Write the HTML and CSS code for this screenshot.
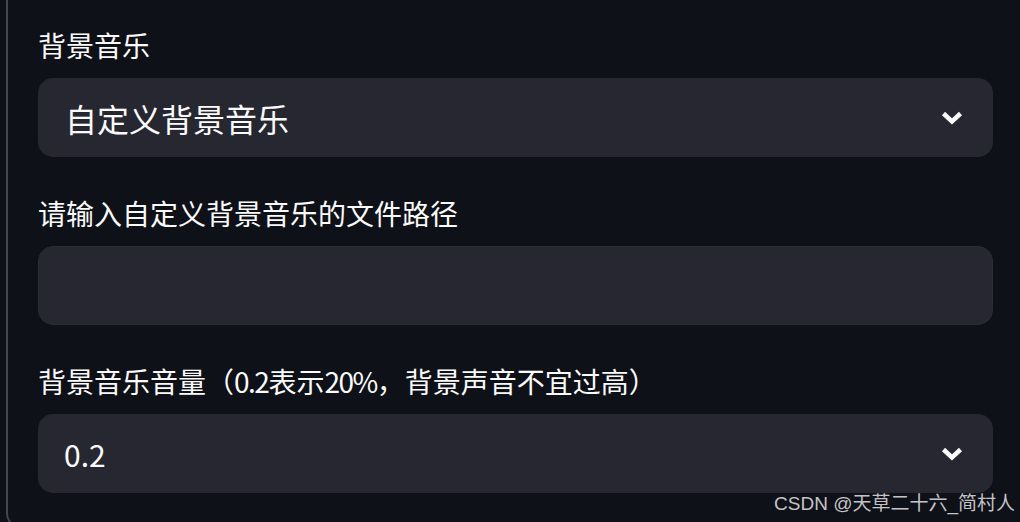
FILE: index.html
```html
<!DOCTYPE html>
<html lang="zh">
<head>
<meta charset="utf-8">
<title>背景音乐</title>
<link rel="stylesheet" href="styles.css">
</head>
<body>
<div class="panel">
  <div class="field">
    <div class="label">背景音乐</div>
    <div class="box select">
      <span class="value big">自定义背景音乐</span>
      <svg class="chev" width="24" height="24" viewBox="0 0 24 24"><path d="M3.5 7.5 L12 15.5 L20.5 7.5" fill="none" stroke="#fafafa" stroke-width="4.5" stroke-linejoin="miter" stroke-linecap="butt"/></svg>
    </div>
  </div>
  <div class="field">
    <div class="label">请输入自定义背景音乐的文件路径</div>
    <div class="box input"></div>
  </div>
  <div class="field">
    <div class="label">背景音乐音量（<span class="lat">0.2</span>表示<span class="lat">20%</span>，背景声音不宜过高）</div>
    <div class="box select">
      <span class="value num">0.2</span>
      <svg class="chev" width="24" height="24" viewBox="0 0 24 24"><path d="M3.5 7.5 L12 15.5 L20.5 7.5" fill="none" stroke="#fafafa" stroke-width="4.5" stroke-linejoin="miter" stroke-linecap="butt"/></svg>
    </div>
  </div>
</div>
<div class="watermark">CSDN @天草二十六_简村人</div>
</body>
</html>
```
FILE: styles.css
```css
html, body {
  margin: 0;
  padding: 0;
  background: #0e1117;
  overflow: hidden;
  width: 1020px;
  height: 522px;
}
body {
  font-family: "Noto Sans CJK SC", "Noto Sans", sans-serif;
  color: #fafafa;
  position: relative;
}
.panel {
  margin-left: 6px;
  border-left: 2px solid #45474d;
  border-bottom: 2px solid #45474d;
  border-bottom-left-radius: 16px;
  padding: 25px 27px 34px 30px;
  display: flex;
  flex-direction: column;
  gap: 36px;
}
.field {
  display: flex;
  flex-direction: column;
  gap: 13px;
}
.label {
  height: 40px;
  line-height: 40px;
  font-size: 28px;
  white-space: nowrap;
}
.lat {
  letter-spacing: -1.5px;
}
.box {
  height: 79px;
  border-radius: 15px;
  background: #262730;
  box-sizing: border-box;
}
.select {
  display: flex;
  align-items: center;
  justify-content: space-between;
  padding: 0 29px 0 27px;
}
.input {
  border: 1px solid #2b2c35;
}
.value {
  white-space: nowrap;
}
.big {
  font-size: 32px;
}
.num {
  font-size: 30px;
  margin-left: -1px;
}
.chev {
  display: block;
}
.watermark {
  position: absolute;
  right: 5px;
  bottom: 6px;
  font-family: "Liberation Sans", "Noto Sans CJK SC", sans-serif;
  font-size: 19px;
  line-height: 24px;
  color: #c4c4c6;
  white-space: nowrap;
}
```
